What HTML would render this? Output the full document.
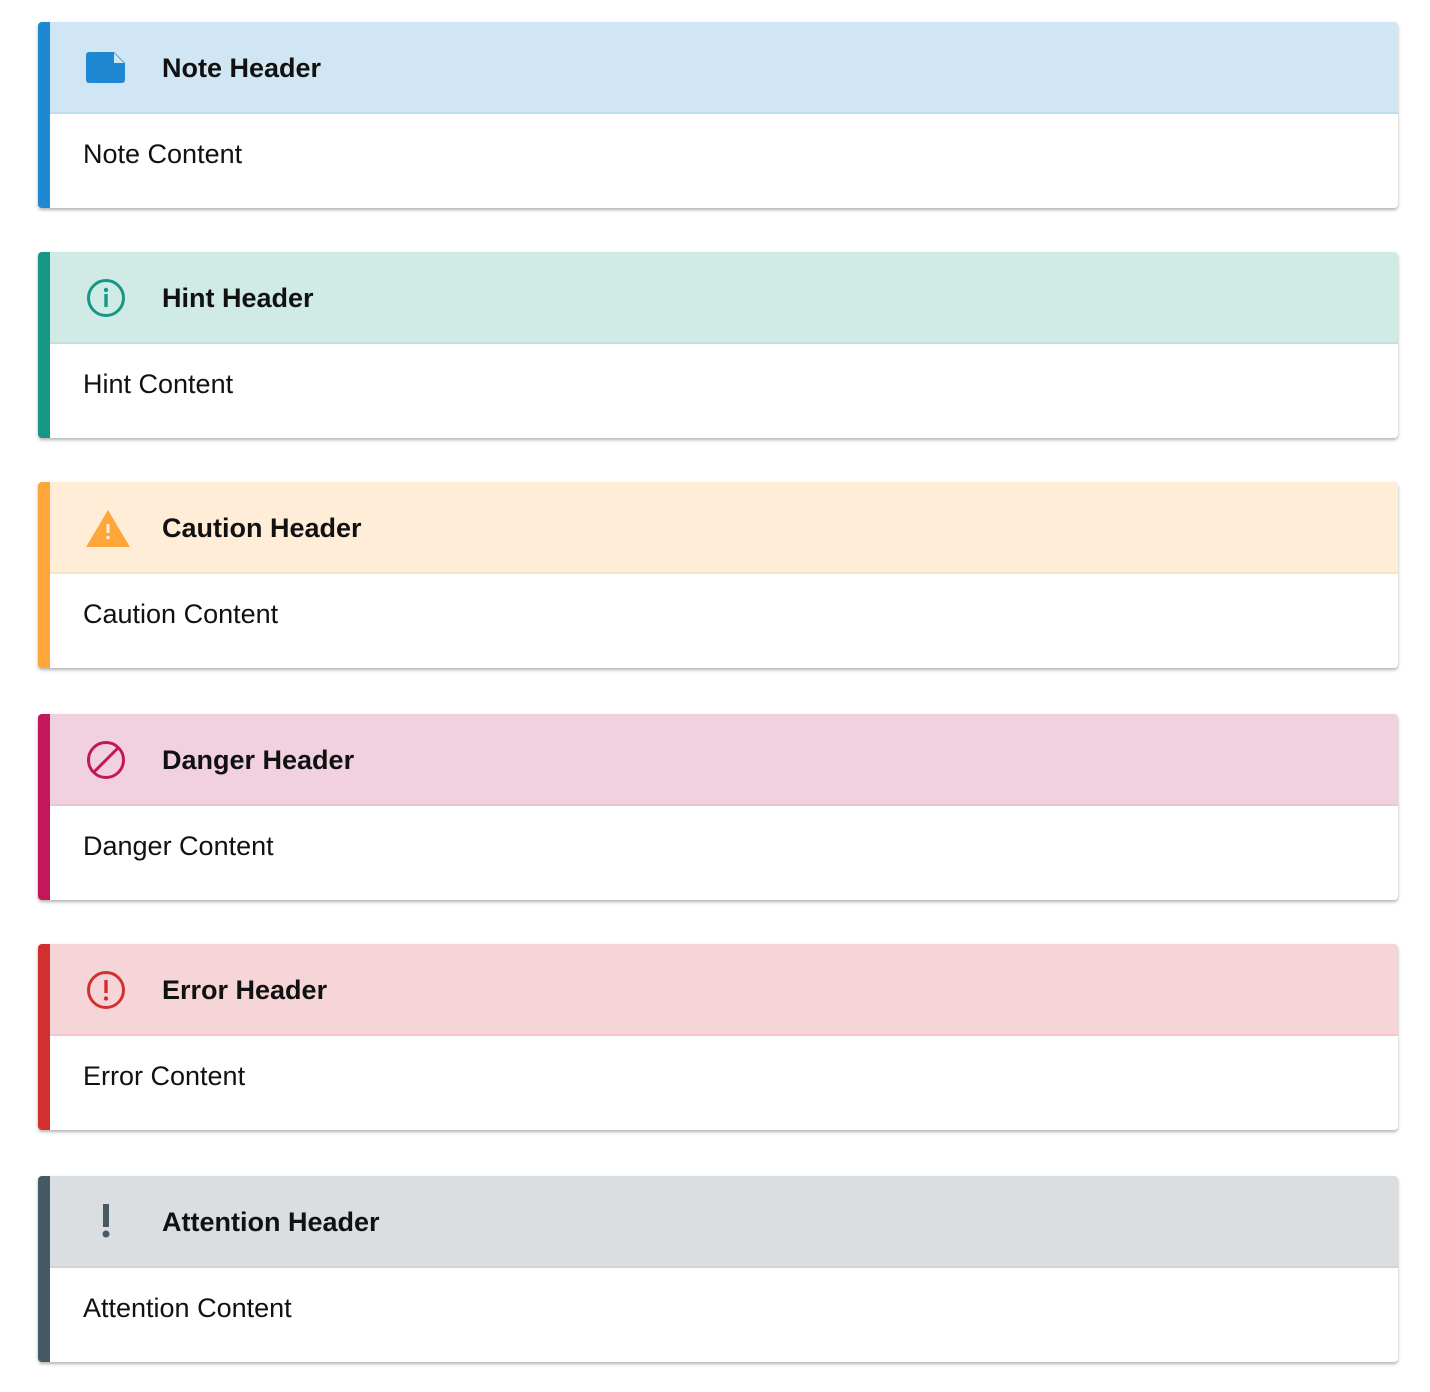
<!DOCTYPE html><html><head><style>
body{margin:0;background:#fff;width:1430px;height:1392px;position:relative;font-family:"Liberation Sans",sans-serif;}
.c{position:absolute;left:38px;width:1348px;border-left:12px solid;border-radius:4px;box-shadow:0 2px 3px rgba(0,0,0,.3);background:#fff;overflow:hidden}
.h{height:90px;border-bottom:2px solid;position:relative;font-weight:bold;font-size:27px;color:#111}
.h span{position:absolute;left:112px;top:31px}
.h svg{position:absolute;left:35px;top:25px}
.b{height:94px;position:relative;font-size:27px;color:#111}
.b span{position:absolute;left:33px;top:25px}
</style></head><body>
<div class="c" style="top:22px;border-color:#1e88d2"><div class="h" style="background:#d0e6f4;border-color:#bcdcf2"><svg width="42" height="40" viewBox="0 0 42 40"><path d="M4 5h25l11 11v17a3 3 0 0 1-3 3H4a3 3 0 0 1-3-3V8a3 3 0 0 1 3-3z" fill="#1e88d2"/><path d="M29 6v10h10z" fill="#d0e6f4"/></svg><span>Note Header</span></div><div class="b"><span>Note Content</span></div></div>
<div class="c" style="top:252px;border-color:#179686"><div class="h" style="background:#d0eae6;border-color:#bfe2dd"><svg width="42" height="42" viewBox="0 0 42 42"><circle cx="21" cy="21" r="17.5" fill="none" stroke="#179686" stroke-width="3"/><circle cx="21" cy="13" r="2.2" fill="#179686"/><rect x="19.3" y="17" width="3.4" height="13" fill="#179686"/></svg><span>Hint Header</span></div><div class="b"><span>Hint Content</span></div></div>
<div class="c" style="top:482px;border-color:#ffa63b"><div class="h" style="background:#ffedd8;border-color:#fbe3c8"><svg width="46" height="42" viewBox="0 0 46 42"><path d="M23 3L45 40H1z" fill="#ffa63b"/><rect x="21.5" y="17" width="3" height="9" fill="#ffedd8"/><rect x="21.5" y="29" width="3" height="3" fill="#ffedd8"/></svg><span>Caution Header</span></div><div class="b"><span>Caution Content</span></div></div>
<div class="c" style="top:714px;border-color:#c2185b"><div class="h" style="background:#f1d1df;border-color:#ebc3d4"><svg width="42" height="42" viewBox="0 0 42 42"><circle cx="21" cy="21" r="17.5" fill="none" stroke="#c2185b" stroke-width="3"/><path d="M33 9L9 33" stroke="#c2185b" stroke-width="3"/></svg><span>Danger Header</span></div><div class="b"><span>Danger Content</span></div></div>
<div class="c" style="top:944px;border-color:#d32f2f"><div class="h" style="background:#f5d5d8;border-color:#f1c7cb"><svg width="42" height="42" viewBox="0 0 42 42"><circle cx="21" cy="21" r="17.5" fill="none" stroke="#d32f2f" stroke-width="3"/><rect x="19.3" y="11" width="3.4" height="13" fill="#d32f2f"/><circle cx="21" cy="29.5" r="2.2" fill="#d32f2f"/></svg><span>Error Header</span></div><div class="b"><span>Error Content</span></div></div>
<div class="c" style="top:1176px;border-color:#455a64"><div class="h" style="background:#dadee1;border-color:#cfd4d7"><svg width="42" height="42" viewBox="0 0 42 42"><rect x="18" y="3" width="6" height="23" fill="#455a64"/><circle cx="21" cy="33" r="3.5" fill="#455a64"/></svg><span>Attention Header</span></div><div class="b"><span>Attention Content</span></div></div>
</body></html>
